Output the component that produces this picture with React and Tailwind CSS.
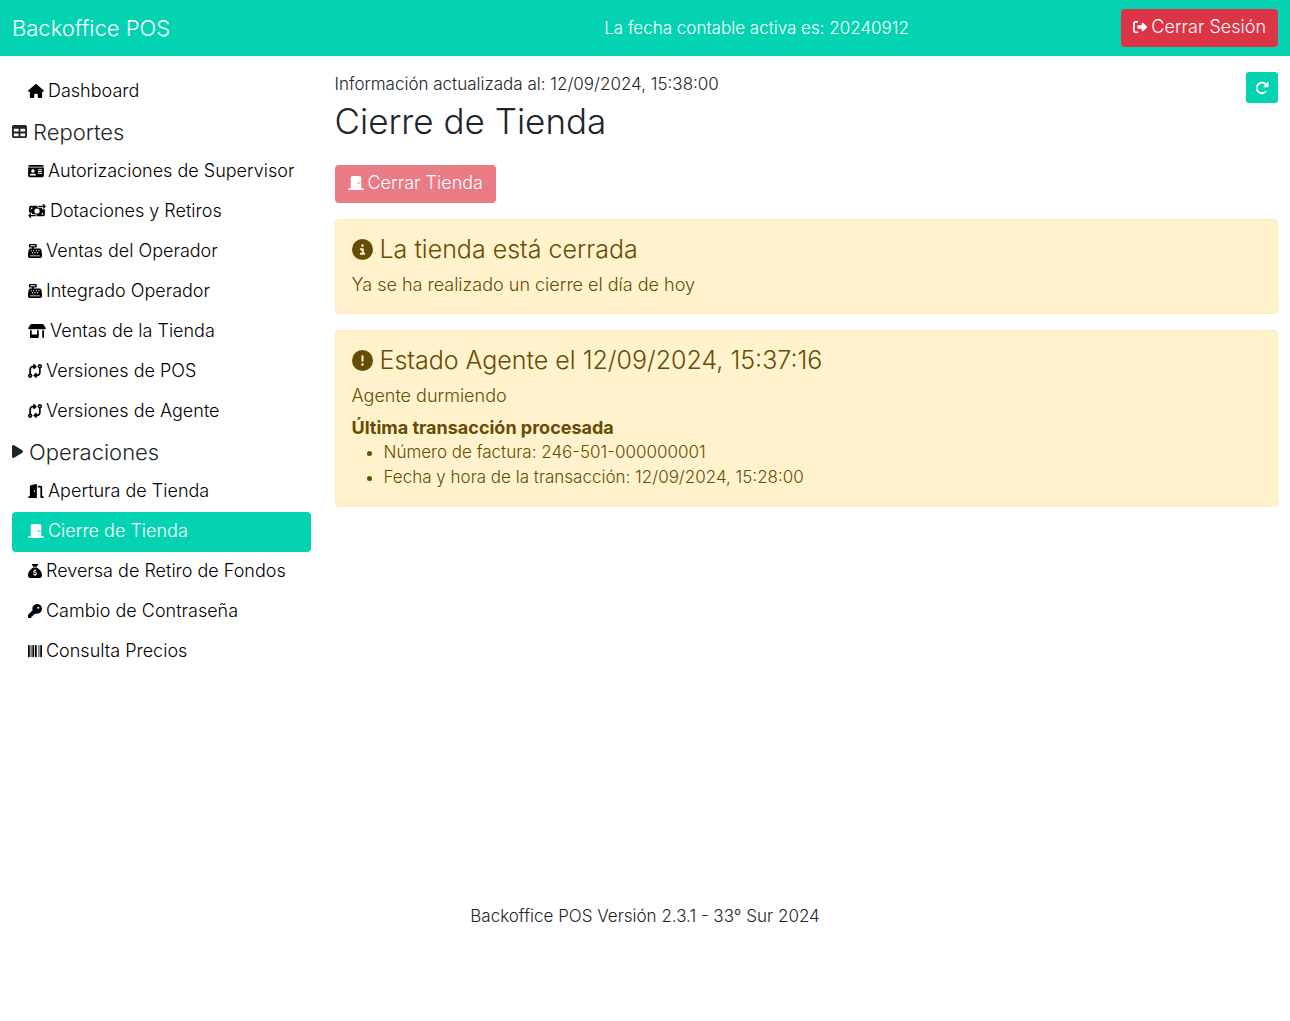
import {
    FaHouse, FaTable, FaIdCard, FaMoneyBillTransfer, FaCashRegister, FaShop, FaCodeCompare, FaPlay,
    FaDoorOpen, FaDoorClosed, FaSackDollar, FaKey, FaBarcode, FaCircleInfo, FaCircleExclamation,
    FaRightFromBracket, FaArrowRotateRight,
} from 'react-icons/fa6';

const reportes = [
    { label: 'Autorizaciones de Supervisor', icon: FaIdCard, size: 'w-4' },
    { label: 'Dotaciones y Retiros', icon: FaMoneyBillTransfer, size: 'w-[18px]' },
    { label: 'Ventas del Operador', icon: FaCashRegister, size: 'w-3.5' },
    { label: 'Integrado Operador', icon: FaCashRegister, size: 'w-3.5' },
    { label: 'Ventas de la Tienda', icon: FaShop, size: 'w-[18px]' },
    { label: 'Versiones de POS', icon: FaCodeCompare, size: 'w-3.5' },
    { label: 'Versiones de Agente', icon: FaCodeCompare, size: 'w-3.5' },
];

const operaciones = [
    { label: 'Apertura de Tienda', icon: FaDoorOpen, size: 'w-4' },
    { label: 'Cierre de Tienda', icon: FaDoorClosed, size: 'w-4', active: true },
    { label: 'Reversa de Retiro de Fondos', icon: FaSackDollar, size: 'w-3.5' },
    { label: 'Cambio de Contraseña', icon: FaKey, size: 'w-3.5' },
    { label: 'Consulta Precios', icon: FaBarcode, size: 'w-3.5' },
];

const NavItem = ({ label, icon: Icon, size, active }) => (
    <a
        href="#"
        aria-current={active ? 'page' : undefined}
        className={`flex h-10 items-center gap-1 rounded px-4 pb-0.5 text-lg whitespace-nowrap ${active ? 'bg-[#03d3b1] text-white' : 'text-black'}`}
    >
        <Icon className={`h-3.5 shrink-0 ${size}`} />
        {label}
    </a>
);

const Alert = ({ title, icon: Icon, children }) => (
    <section className="mb-4 rounded border border-[#ffecb5] bg-[#fff2cd] p-4 text-[#664d03]">
        <h4 className="mb-2 flex items-center gap-[7px] pb-0.5 text-[25px] leading-[27px]">
            <Icon className="h-[21px] w-[21px] shrink-0" />
            {title}
        </h4>
        {children}
    </section>
);

const App = () => {
    return (
        <div className="min-h-screen bg-white font-['Inter',sans-serif] text-[17px] leading-6 font-light text-[#212529]">

            {/* Navbar */}
            <header className="flex h-14 items-center bg-[#03d3b1] px-3 text-white">
                <a href="#" className="w-[30%] text-[22px]">Backoffice POS</a>
                <p className="flex-1 text-center">La fecha contable activa es: 20240912</p>
                <button type="button" className="flex h-[38px] items-center gap-1 rounded bg-[#dc3545] px-3 pb-0.5 text-lg">
                    <FaRightFromBracket className="h-3.5 w-3.5" />
                    Cerrar Sesión
                </button>
            </header>

            <div className="flex min-h-[832px]">
                {/* Sidebar */}
                <nav className="w-1/4 shrink-0 px-3 pt-4">
                    <NavItem label="Dashboard" icon={FaHouse} size="w-4" />
                    <h5 className="flex h-10 items-center gap-1.5 pb-px text-[22px]">
                        <FaTable className="h-[15px] w-[15px]" />
                        Reportes
                    </h5>
                    {reportes.map(item => <NavItem key={item.label} {...item} />)}
                    <h5 className="flex h-10 items-center gap-1.5 pb-px text-[22px]">
                        <FaPlay className="h-[15px] w-[11px]" />
                        Operaciones
                    </h5>
                    {operaciones.map(item => <NavItem key={item.label} {...item} />)}
                </nav>

                {/* Content */}
                <main className="min-w-0 flex-1 px-3 pt-4">
                    <div className="flex items-start justify-between">
                        <div>
                            <p>Información actualizada al: 12/09/2024, 15:38:00</p>
                            <h1 className="mt-1.5 text-[35px] leading-[38px]">Cierre de Tienda</h1>
                        </div>
                        <button type="button" aria-label="Actualizar" className="flex h-[31px] w-8 items-center justify-center rounded-[3px] bg-[#03d3b1] text-white">
                            <FaArrowRotateRight className="h-3.5 w-3.5" />
                        </button>
                    </div>

                    <button type="button" disabled className="mt-[25px] mb-4 flex h-[38px] items-center gap-1 rounded bg-[#dc3545] px-[13px] pb-0.5 text-lg text-white opacity-65">
                        <FaDoorClosed className="h-3.5 w-4" />
                        Cerrar Tienda
                    </button>

                    <Alert title="La tienda está cerrada" icon={FaCircleInfo}>
                        <p className="text-lg leading-6">Ya se ha realizado un cierre el día de hoy</p>
                    </Alert>

                    <Alert title="Estado Agente el 12/09/2024, 15:37:16" icon={FaCircleExclamation}>
                        <p className="mb-2 text-lg leading-6">Agente durmiendo</p>
                        <p className="text-lg leading-6 font-bold">Última transacción procesada</p>
                        <ul className="list-disc pl-8 leading-[25px]">
                            <li>Número de factura: 246-501-000000001</li>
                            <li>Fecha y hora de la transacción: 12/09/2024, 15:28:00</li>
                        </ul>
                    </Alert>
                </main>
            </div>

            <footer className="px-3 pt-4 text-center">
                <p>Backoffice POS Versión 2.3.1 - 33° Sur 2024</p>
            </footer>
        </div>
    );
};

export default App;
